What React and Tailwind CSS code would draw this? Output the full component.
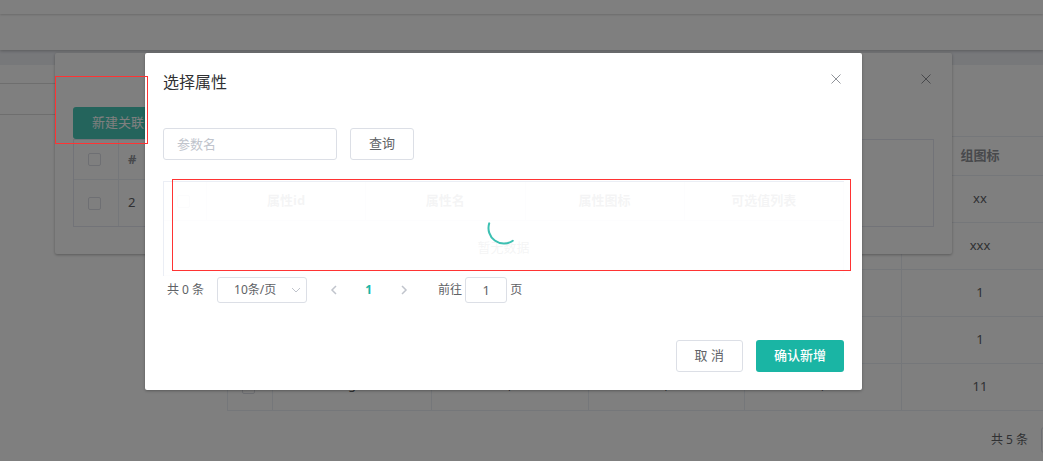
import React from "react";

const attributeColumns = ["属性id", "属性名", "属性图标", "可选值列表"];

const groupRows = [
  { id: 1, cells: ["", "", "", ""], icon: "xx" },
  { id: 2, cells: ["", "", "", ""], icon: "xxx" },
  { id: 3, cells: ["", "", "", ""], icon: "1" },
  { id: 4, cells: ["", "", "", ""], icon: "1" },
  { id: 5, cells: ["g", ",", ",", ","], icon: "11" },
];

function Checkbox({ label }) {
  return (
    <div className="flex justify-center pr-1">
      <input
        type="checkbox"
        aria-label={label}
        className="block size-[13px] appearance-none rounded-xs border border-[#dcdfe6] bg-white"
      />
    </div>
  );
}

function CloseButton() {
  return (
    <button type="button" aria-label="Close" className="flex size-4 items-center justify-center text-[#909399]">
      <svg viewBox="0 0 10 10" className="size-[10px]" fill="none" stroke="currentColor" strokeWidth="1">
        <path d="M.5.5l9 9M9.5.5l-9 9" />
      </svg>
    </button>
  );
}

function Chevron({ d, className }) {
  return (
    <svg viewBox="0 0 10 10" className={className} fill="none" stroke="currentColor">
      <path d={d} />
    </svg>
  );
}

function Page() {
  const cell = "border-r border-b border-[#ebeef5] p-0 text-center";
  return (
    <div className="isolate flex flex-col">
      <header className="relative z-10 h-[14px] bg-white shadow-[0_1px_2px_rgba(0,0,0,0.16)]" />
      <nav className="relative h-9 bg-white shadow-[0_1px_3px_rgba(0,0,0,0.25)]" />
      <div className="bg-[#eef0f5] pt-[15px]">
        <div className="flex bg-white">
          <aside className="w-[212px] shrink-0">
            <div className="h-[19px] border-b border-[#dcdcdc]" />
            <div className="h-[31px] border-b border-[#dcdcdc]" />
          </aside>
          <main className="min-w-0 grow overflow-hidden pt-[71px] pl-[15px]">
            <table className="w-full min-w-[832px] table-fixed border-separate border-spacing-0 border-t border-l border-[#ebeef5] text-[13px] text-[#606266]">
              <colgroup>
                <col className="w-[45px]" />
                <col className="w-[159px]" />
                <col className="w-[157px]" />
                <col className="w-[156px]" />
                <col className="w-[157px]" />
                <col />
              </colgroup>
              <thead>
                <tr>
                  <th className={"h-[39px] " + cell} />
                  <th className={cell} />
                  <th className={cell} />
                  <th className={cell} />
                  <th className={cell} />
                  <th className={"font-bold text-[#909399] " + cell}>组图标</th>
                </tr>
              </thead>
              <tbody>
                {groupRows.map((row) => (
                  <tr key={row.id}>
                    <td className={"h-[47px] " + cell}>
                      <Checkbox label="选择行" />
                    </td>
                    {row.cells.map((value, i) => (
                      <td key={i} className="border-r border-b border-[#ebeef5] px-0 pt-0 pb-1 text-center">{value}</td>
                    ))}
                    <td className={cell}>{row.icon}</td>
                  </tr>
                ))}
              </tbody>
            </table>
            <div className="flex items-center gap-[13px] pt-4 pl-[764px] text-xs text-[#606266]">
              <span className="shrink-0">共 5 条</span>
              <select aria-label="每页条数" className="h-[26px] w-[90px] shrink-0 appearance-none rounded-[3px] border border-[#dcdfe6] bg-white pl-4">
                <option>10条/页</option>
              </select>
            </div>
          </main>
        </div>
      </div>
    </div>
  );
}

function RelationDialog() {
  return (
    <div className="absolute inset-0 flex items-start pt-[53px] pr-[91px] pl-[55px]">
      <section className="grow rounded-xs bg-white px-[18px] pb-[27px] shadow-[0_1px_3px_rgba(0,0,0,0.3)]">
        <div className="flex h-[54px] justify-end pt-[18px]">
          <CloseButton />
        </div>
        <button type="button" className="block h-8 rounded-[3px] bg-[#48c9b8] px-[19px] text-[13px] text-white">
          新建关联
        </button>
        <div className="border border-[#e4e7f0]">
          <table className="w-3/5 table-fixed border-separate border-spacing-0 text-left text-[13px] text-[#606266]">
            <colgroup>
              <col className="w-[45px]" />
              <col />
            </colgroup>
            <thead>
              <tr>
                <th className="h-10 border-r border-b border-[#ebeef5] p-0">
                  <Checkbox label="全选关联" />
                </th>
                <th className="border-b border-[#ebeef5] py-0 pl-[9px] font-bold text-[#909399]">#</th>
              </tr>
            </thead>
            <tbody>
              <tr>
                <td className="h-[46px] border-r border-[#ebeef5] p-0">
                  <Checkbox label="选择关联" />
                </td>
                <td className="py-0 pl-[9px]">2</td>
              </tr>
            </tbody>
          </table>
        </div>
      </section>
    </div>
  );
}

function Pagination() {
  return (
    <div className="flex items-center pt-px pl-1 text-xs text-[#606266]">
      <span>共 0 条</span>
      <div className="relative ml-[13px]">
        <select aria-label="每页条数" className="block h-[26px] w-[90px] appearance-none rounded-[3px] border border-[#dcdfe6] bg-white pl-4">
          <option>10条/页</option>
        </select>
        <Chevron d="M1 3l4 4 4-4" className="pointer-events-none absolute top-2 right-1.5 size-[10px] text-[#c0c4cc]" />
      </div>
      <div className="ml-[9px] flex text-[#c0c4cc]">
        <button type="button" aria-label="上一页" className="flex h-[26px] w-[35px] items-center justify-center">
          <Chevron d="M7 1L3 5l4 4" className="size-[10px] stroke-[1.5]" />
        </button>
        <button type="button" className="h-[26px] w-[35px] font-bold text-[#1ab5a4]">1</button>
        <button type="button" aria-label="下一页" className="flex h-[26px] w-[35px] items-center justify-center">
          <Chevron d="M3 1l4 4-4 4" className="size-[10px] stroke-[1.5]" />
        </button>
      </div>
      <label className="ml-[17px] flex items-center gap-[3px]">
        前往
        <input type="text" defaultValue="1" className="h-[26px] w-[42px] rounded-[3px] border border-[#dcdfe6] text-center text-[13px]" />
        页
      </label>
    </div>
  );
}

function AttributeTable() {
  return (
    <div className="relative border-t border-l border-[#ebeef5]">
      <table className="w-full table-fixed border-separate border-spacing-0 text-[13px]">
        <colgroup>
          <col className="w-[43px]" />
          <col />
          <col />
          <col />
          <col />
        </colgroup>
        <thead>
          <tr className="text-[#909399]">
            <th className="h-[39px] border-r border-b border-[#ebeef5] p-0">
              <Checkbox label="全选属性" />
            </th>
            {attributeColumns.map((name) => (
              <th key={name} className="border-r border-b border-[#ebeef5] p-0 text-center font-bold">
                {name}
              </th>
            ))}
          </tr>
        </thead>
        <tbody>
          <tr>
            <td colSpan={5} className="h-[55px] border-r border-b border-[#ebeef5] p-0 text-center text-[#909399]">
              暂无数据
            </td>
          </tr>
        </tbody>
      </table>
      <div className="absolute inset-0 flex items-center justify-center bg-white/90">
        <svg viewBox="0 0 32 32" className="size-8 overflow-visible" fill="none" stroke="#1ab5a4" strokeWidth="2" strokeLinecap="round" strokeOpacity="0.85">
          <path d="M1.2 10.4A15.5 15.5 0 0 0 24.8 27.8" />
        </svg>
      </div>
    </div>
  );
}

function AttributeDialog() {
  return (
    <div className="absolute inset-0 flex items-start pt-[53px] pr-[181px] pl-[145px]">
      <section role="dialog" aria-labelledby="attribute-title" className="min-w-0 grow rounded-xs bg-white p-[18px] shadow-[0_1px_3px_rgba(0,0,0,0.3)]">
        <div className="flex items-start justify-between">
          <h2 id="attribute-title" className="text-base leading-[22px] text-[#303133]">选择属性</h2>
          <CloseButton />
        </div>
        <form className="flex gap-[13px] pt-[35px]">
          <input
            type="text"
            aria-label="参数名"
            placeholder="参数名"
            className="h-8 w-[174px] rounded-[3px] border border-[#dcdfe6] px-[13px] text-[13px] placeholder:text-[#c0c4cc]"
          />
          <button type="button" className="h-8 rounded-[3px] border border-[#dcdfe6] px-[18px] text-[13px] text-[#606266]">
            查询
          </button>
        </form>
        <div className="pt-[21px]">
          <AttributeTable />
          <Pagination />
        </div>
        <div className="flex justify-end gap-[13px] pt-[37px] text-[13px]">
          <button type="button" className="h-8 rounded-[3px] border border-[#dcdfe6] px-[18px] text-[#606266]">取 消</button>
          <button type="button" className="h-8 rounded-[3px] bg-[#1ab5a4] px-[18px] font-medium text-white">确认新增</button>
        </div>
      </section>
    </div>
  );
}

export default function App() {
  return (
    <div className="relative h-screen overflow-hidden bg-white font-['Noto_Sans','Noto_Sans_CJK_SC',sans-serif]">
      <Page />
      <RelationDialog />
      <div className="absolute inset-0 bg-black/50" />
      <AttributeDialog />
      <div className="pointer-events-none absolute top-[76px] left-[55px] h-[68px] w-[93px] border border-[#ff3333]" />
      <div className="pointer-events-none absolute top-[179px] right-[192px] left-[172px] h-[92px] border border-[#ff3333]" />
    </div>
  );
}
